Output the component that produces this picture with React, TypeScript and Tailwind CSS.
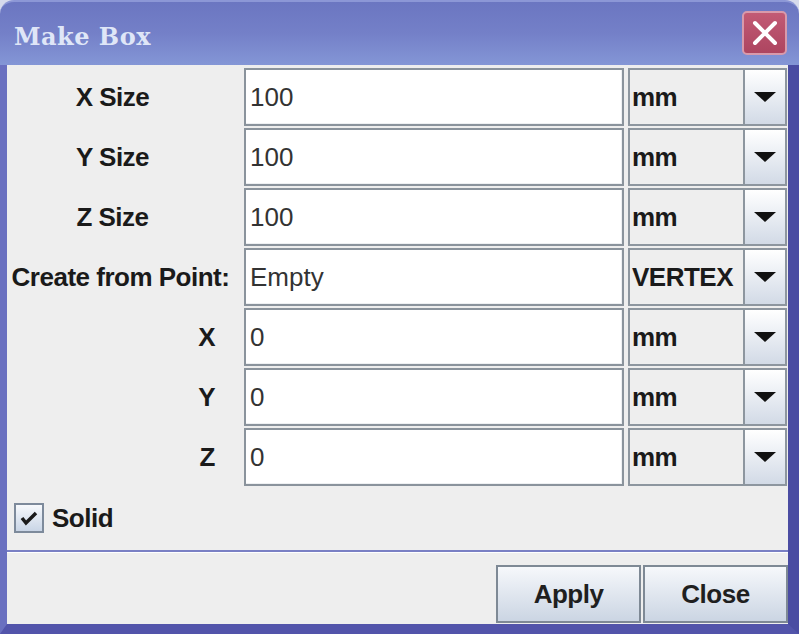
import React from "react"

const font = { fontFamily: '"Liberation Sans", Arial, sans-serif' }

interface Row {
  label: string
  value: string
  unit: string
  align: "center" | "right" | "wide"
}

const rows: Row[] = [
  { label: "X Size", value: "100", unit: "mm", align: "center" },
  { label: "Y Size", value: "100", unit: "mm", align: "center" },
  { label: "Z Size", value: "100", unit: "mm", align: "center" },
  { label: "Create from Point:", value: "Empty", unit: "VERTEX", align: "wide" },
  { label: "X", value: "0", unit: "mm", align: "right" },
  { label: "Y", value: "0", unit: "mm", align: "right" },
  { label: "Z", value: "0", unit: "mm", align: "right" },
]

const Arrow = () => (
  <svg width="22" height="11" viewBox="0 0 22 11">
    <polygon points="0,0 22,0 11,10" fill="#111" />
  </svg>
)

const Combo = ({ unit }: { unit: string }) => (
  <div className="flex h-full border-2 border-[#8d969f]">
    <div className="flex flex-1 items-center bg-[#eeeeee] pl-[2px] text-[26px] font-bold tracking-[-0.5px] text-[#1a1a1a]">
      {unit}
    </div>
    <div className="flex w-[42px] items-center justify-center border-l-2 border-[#8d969f] bg-gradient-to-b from-[#ffffff] to-[#d2dae6]">
      <Arrow />
    </div>
  </div>
)

export default function App() {
  return (
    <div className="h-[634px] w-[799px] overflow-hidden bg-[#d6daec]" style={font}>
      <div className="flex h-full flex-col">
        {/* title bar */}
        <div className="flex h-[65px] items-center justify-between rounded-t-[14px] border-t-2 border-[#8c97d6] bg-gradient-to-b from-[#6b76c1] via-[#7480c8] to-[#8496d6] pl-[14px] pr-[12px]">
          <span
            className="mt-[6px] text-[24px] font-bold tracking-[0.5px] text-[#dfe6f7]"
            style={{ fontFamily: '"DejaVu Serif", "Liberation Serif", serif' }}
          >
            Make Box
          </span>
          <div className="mt-[-2px] flex h-[44px] w-[45px] items-center justify-center rounded-[5px] border-2 border-[#d89aab] bg-gradient-to-b from-[#c25a74] to-[#ad4560]">
            <svg width="28" height="28" viewBox="0 0 28 28">
              <path d="M4 4 L24 24 M24 4 L4 24" stroke="#fff" strokeWidth="4" strokeLinecap="round" />
            </svg>
          </div>
        </div>

        {/* body with frame */}
        <div className="flex flex-1 border-l-[7px] border-r-[11px] border-b-[10px] border-l-[#6a70c0] border-r-[#4a4ca2] border-b-[#5254aa]">
          <div className="flex flex-1 flex-col bg-[#eeeeee]">
            <div className="grid grid-cols-[233px_380px_159px] gap-x-[4px] gap-y-[2px] pt-[3px]">
              {rows.map((r, i) => (
                <React.Fragment key={i}>
                  <div
                    className={`flex h-[58px] items-center whitespace-nowrap text-[26px] font-bold tracking-[-0.5px] text-[#1a1a1a] ${
                      r.align === "center"
                        ? "justify-center pr-[22px]"
                        : r.align === "right"
                        ? "justify-end pr-[25px]"
                        : "justify-center pr-[6px]"
                    }`}
                  >
                    {r.label}
                  </div>
                  <div className="flex h-[58px] items-center border-2 border-[#8a939c] bg-white pl-[4px] text-[26px] text-[#333333] shadow-[inset_-1px_-1px_0_#eef0f2]">
                    {r.value}
                  </div>
                  <div className="h-[58px]">
                    <Combo unit={r.unit} />
                  </div>
                </React.Fragment>
              ))}
            </div>

            <div className="mt-[17px] flex h-[30px] items-center pl-[7px]">
              <div className="flex h-[30px] w-[30px] items-center justify-center border-2 border-[#7d8a9b] bg-gradient-to-b from-[#f7f9fc] to-[#c9d5e6]">
                <svg width="18" height="16" viewBox="0 0 18 16">
                  <path d="M2 8 L6 13 L16 3" stroke="#1a1a1a" strokeWidth="3.5" fill="none" />
                </svg>
              </div>
              <span className="ml-[8px] text-[26px] font-bold tracking-[-0.5px] text-[#1a1a1a]">Solid</span>
            </div>

            <div className="flex-1" />
            <div className="h-[2px] bg-[#7a80c4]" />
            <div className="h-[1px] bg-white" />

            <div className="flex justify-end gap-[2px] pb-[1px] pt-[12px]">
              {["Apply", "Close"].map((b) => (
                <div
                  key={b}
                  className="flex h-[58px] w-[145px] items-center justify-center border-2 border-[#7e8995] bg-gradient-to-b from-[#f6f8fb] to-[#cbd5e3] text-[26px] font-bold tracking-[-0.5px] text-[#1f1f1f]"
                >
                  {b}
                </div>
              ))}
            </div>
          </div>
        </div>
      </div>
    </div>
  )
}
